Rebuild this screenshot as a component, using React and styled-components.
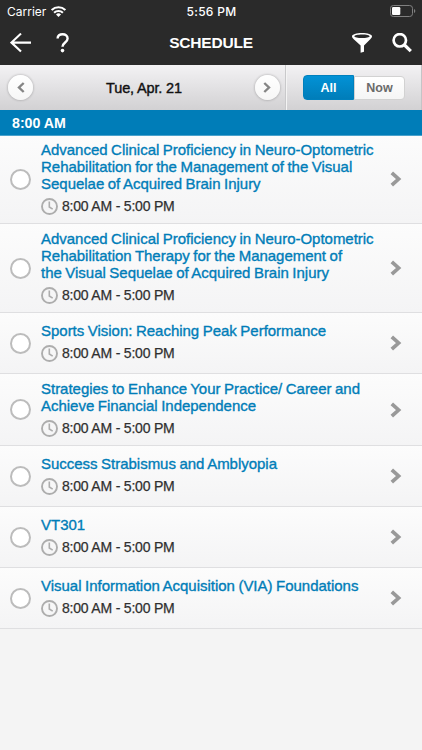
import React from 'react';
import styled, { createGlobalStyle } from 'styled-components';

const blue = '#007db8';
const dark = '#2a2a2a';

const sessions = [
  {
    id: 1,
    lines: [
      'Advanced Clinical Proficiency in Neuro-Optometric',
      'Rehabilitation for the Management of the Visual',
      'Sequelae of Acquired Brain Injury',
    ],
  },
  {
    id: 2,
    lines: [
      'Advanced Clinical Proficiency in Neuro-Optometric',
      'Rehabilitation Therapy for the Management of',
      'the Visual Sequelae of Acquired Brain Injury',
    ],
  },
  { id: 3, lines: ['Sports Vision: Reaching Peak Performance'] },
  {
    id: 4,
    lines: [
      'Strategies to Enhance Your Practice/ Career and',
      'Achieve Financial Independence',
    ],
  },
  { id: 5, lines: ['Success Strabismus and Amblyopia'] },
  { id: 6, lines: ['VT301'] },
  { id: 7, lines: ['Visual Information Acquisition (VIA) Foundations'] },
];

const Session = ({ lines }) => (
  <Row>
    <Check />
    <Details>
      {lines.map((line) => (
        <TitleLine key={line}>{line}</TitleLine>
      ))}
      <Time>
        <svg width="17" height="17" viewBox="0 0 17 17" fill="none" stroke="#adadad">
          <circle cx="8.5" cy="8.5" r="7.5" strokeWidth="1.9" />
          <path d="M8.3 3.6V9l3.4 2.2" strokeWidth="1.6" />
        </svg>
        <span>8:00 AM - 5:00 PM</span>
      </Time>
    </Details>
    <Chevron width="12" height="16" viewBox="0 0 12 16">
      <path d="M1.8 1.8 8.6 8l-6.8 6.2" />
    </Chevron>
  </Row>
);

const App = () => (
  <Screen>
    <GlobalStyle />
    <StatusBar>
      <Carrier>
        <span>Carrier</span>
        <svg width="15" height="11" viewBox="0 0 15 11" fill="none" stroke="#fff" strokeWidth="2.1">
          <path d="M.7 4.1a9.7 9.7 0 0 1 13.6 0" />
          <path d="M3.1 6.8a6.3 6.3 0 0 1 8.8 0" />
          <path d="M7.5 11 5 8.5a3.5 3.5 0 0 1 5 0z" fill="#fff" stroke="none" />
        </svg>
      </Carrier>
      <Clock>5:56 PM</Clock>
      <Battery>
        <svg width="26" height="12" viewBox="0 0 26 12">
          <rect x=".5" y=".5" width="22" height="11" rx="2.8" fill="none" stroke="#808080" />
          <rect x="2" y="2" width="8.3" height="8" rx="1.2" fill="#fff" />
          <path d="M24 4v4q1.3-.6 1.3-2T24 4" fill="#808080" />
        </svg>
      </Battery>
    </StatusBar>
    <NavBar>
      <NavGroup $gap={24}>
        <svg width="22" height="20" viewBox="0 0 22 20" fill="none" stroke="#fff" strokeWidth="2.1">
          <path d="M21 9.6H1.5M11 .6 1.5 9.6l9.5 9" />
        </svg>
        <svg width="14" height="20" viewBox="0 0 14 20">
          <path
            d="M1.6 5.6C1.6 2.6 3.7 1.2 6.6 1.2s5 1.6 5 4.4c0 4-5.1 3.9-5.1 8.2"
            fill="none"
            stroke="#fff"
            strokeWidth="2.4"
          />
          <circle cx="6.5" cy="17.6" r="1.8" fill="#fff" />
        </svg>
      </NavGroup>
      <Heading>SCHEDULE</Heading>
      <NavGroup $gap={20} $end>
        <svg width="20" height="20" viewBox="0 0 20 20">
          <path
            fill="#fff"
            fillRule="evenodd"
            d="M10 0c5.6 0 10 1.4 10 3.3 0 1-.7 1.9-1.5 2.7L12 12.6v6.2l-3.4.9v-7.1L1.5 6C.7 5.2 0 4.3 0 3.3 0 1.4 4.4 0 10 0m0 1.5c-4.2 0-7.6.7-7.6 1.8s3.4 1.800 7.600 1.800 7.600-.7 7.600-1.800-3.400-1.800-7.600-1.800"
          />
        </svg>
        <svg width="20" height="20" viewBox="0 0 20 20" fill="none" stroke="#fff">
          <circle cx="7.8" cy="7.3" r="6.2" strokeWidth="2.7" />
          <path d="m12 11.5 6.8 6.6" strokeWidth="3.2" />
        </svg>
      </NavGroup>
    </NavBar>
    <DateBar>
      <DatePicker>
        <RoundButton aria-label="Previous day">
          <svg width="8" height="11" viewBox="0 0 8 11" fill="none" stroke="#858585" strokeWidth="2.4">
            <path d="M6.7 1 2 5.5 6.7 10" />
          </svg>
        </RoundButton>
        <DateText>Tue, Apr. 21</DateText>
        <RoundButton aria-label="Next day">
          <svg width="8" height="11" viewBox="0 0 8 11" fill="none" stroke="#858585" strokeWidth="2.4">
            <path d="M1.3 1 6 5.5 1.3 10" />
          </svg>
        </RoundButton>
      </DatePicker>
      <FilterArea>
        <Segment $active>All</Segment>
        <Segment>Now</Segment>
      </FilterArea>
    </DateBar>
    <SectionHeader>8:00 AM</SectionHeader>
    {sessions.map((s) => (
      <Session key={s.id} lines={s.lines} />
    ))}
  </Screen>
);

export default App;

const GlobalStyle = createGlobalStyle`
  body {
    margin: 0;
    background-color: #f4f4f4;
  }
`;

const Screen = styled.div`
  height: 750px;
  overflow: hidden;
  background-color: #f4f4f4;
  font-family: 'Liberation Sans', Arial, sans-serif;
  svg {
    display: block;
    flex: none;
  }
`;

const StatusBar = styled.div`
  display: grid;
  grid-template-columns: 1fr auto 1fr;
  align-items: center;
  height: 22px;
  padding: 0 6px 0 7px;
  background-color: ${dark};
  color: white;
  font-family: Inter, 'Liberation Sans', sans-serif;
  font-size: 12px;
`;

const Carrier = styled.div`
  display: flex;
  align-items: center;
  gap: 5px;
`;

const Clock = styled.div`
  font-weight: 500;
  letter-spacing: 0.3px;
`;

const Battery = styled.div`
  display: flex;
  justify-content: flex-end;
`;

const NavBar = styled.div`
  display: grid;
  grid-template-columns: 1fr auto 1fr;
  align-items: center;
  box-sizing: border-box;
  height: 43px;
  padding: 0 10px 1px;
  background-color: ${dark};
`;

const NavGroup = styled.div`
  display: flex;
  gap: ${({ $gap }) => $gap}px;
  justify-content: ${({ $end }) => ($end ? 'flex-end' : 'flex-start')};
`;

const Heading = styled.h1`
  margin: 0;
  color: white;
  font-size: 15.5px;
  font-weight: bold;
  letter-spacing: -0.2px;
`;

const DateBar = styled.div`
  display: flex;
  height: 45px;
  background: linear-gradient(#f3f2f4, #d2d1d3);
`;

const DatePicker = styled.div`
  display: flex;
  align-items: center;
  justify-content: space-between;
  box-sizing: border-box;
  width: 286px;
  padding: 0 5px 0 8px;
  border-right: 1px solid #c9c9cb;
`;

const RoundButton = styled.button`
  display: flex;
  align-items: center;
  justify-content: center;
  width: 25px;
  height: 25px;
  padding: 0;
  border: none;
  border-radius: 50%;
  background: linear-gradient(white, #f6f6f6);
  box-shadow: 0 0 2px 1px rgba(0, 0, 0, 0.14);
`;

const DateText = styled.div`
  color: #111;
  font-size: 14.5px;
  letter-spacing: -0.15px;
  -webkit-text-stroke: 0.4px #111;
`;

const FilterArea = styled.div`
  display: flex;
  flex: 1;
  align-items: center;
  padding-left: 16px;
  border-left: 1px solid #f4f4f4;
  border-right: 1px solid #c4c4c6;
`;

const Segment = styled.button`
  box-sizing: border-box;
  width: 51px;
  height: ${({ $active }) => ($active ? 25 : 24)}px;
  padding: 0;
  border: 1px solid ${({ $active }) => ($active ? '#0080bd' : '#d2d2d2')};
  border-radius: ${({ $active }) => ($active ? '4px 0 0 4px' : '0 4px 4px 0')};
  background: ${({ $active }) =>
    $active ? 'linear-gradient(#0292d6, #007db9)' : 'linear-gradient(#fff, #f5f5f5)'};
  color: ${({ $active }) => ($active ? 'white' : '#6b6b6b')};
  font-family: inherit;
  font-size: 12.5px;
  font-weight: bold;
  line-height: 22px;
`;

const SectionHeader = styled.div`
  position: relative;
  height: 25px;
  padding-left: 12px;
  background-color: ${blue};
  box-shadow: 0 1px 0 #4aa2cc;
  color: white;
  font-size: 14.2px;
  font-weight: bold;
  line-height: 27px;
`;

const Row = styled.div`
  display: flex;
  align-items: center;
  box-sizing: border-box;
  min-height: 61px;
  padding: 6px 20px 3px 10px;
  border-bottom: 1px solid #dfdfe1;
  background: linear-gradient(#fcfcfc, #f4f4f5);
`;

const Check = styled.div`
  flex: none;
  box-sizing: border-box;
  width: 21px;
  height: 21px;
  margin-bottom: 3px;
  border: 2px solid #bcbcbc;
  border-radius: 50%;
  background-color: white;
`;

const Chevron = styled.svg`
  margin-bottom: 3px;
  fill: none;
  stroke: #999;
  stroke-width: 3.7;
`;

const Details = styled.div`
  flex: 1;
  min-width: 0;
  padding-left: 10px;
`;

const TitleLine = styled.div`
  color: ${blue};
  font-size: 15px;
  letter-spacing: -0.02px;
  word-spacing: -0.6px;
  line-height: 17px;
  white-space: nowrap;
  -webkit-text-stroke: 0.35px ${blue};
`;

const Time = styled.div`
  display: flex;
  align-items: center;
  gap: 4px;
  height: 28px;
  color: #303030;
  font-size: 14px;
  letter-spacing: -0.2px;
  -webkit-text-stroke: 0.25px #303030;
`;
